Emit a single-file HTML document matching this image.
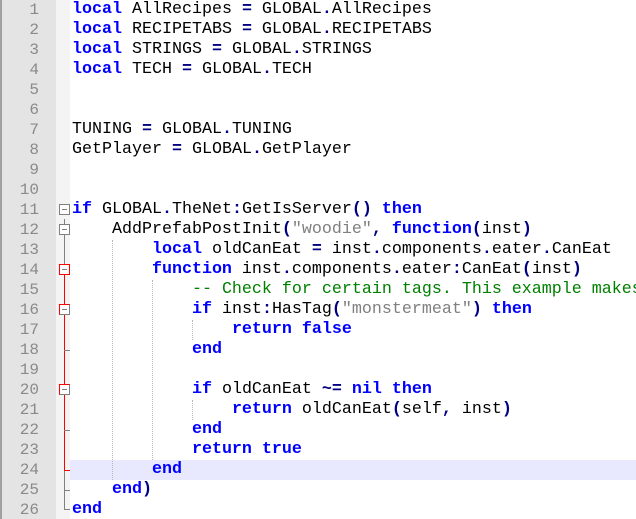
<!DOCTYPE html>
<html><head><meta charset="utf-8"><style>
html,body{margin:0;padding:0;background:#fff;width:636px;height:519px;overflow:hidden;position:relative}
#num{position:absolute;left:0;top:0;width:56px;height:519px;background:#e4e4e4;border-left:2px solid #a0a0a0;box-sizing:border-box}
#fold{position:absolute;left:56px;top:0;width:14px;height:519px;background:#f4f4f4}
.ln{position:absolute;left:0;width:39px;text-align:right;font:16px "Liberation Mono",monospace;color:#8a8a8a;line-height:20px}
#code{position:absolute;left:72px;top:0;margin:0;font:16.67px/20px "Liberation Mono",monospace;color:#000;white-space:pre}
.k{color:#0000ff;font-weight:bold}
.o{color:#000080;font-weight:bold}
.s{color:#808080}
.c{color:#008000}
.g{position:absolute;width:0;border-left:1px dotted #b8b8b8}
.hl{position:absolute;left:70px;top:460px;width:566px;height:20px;background:#e8e8ff}
.box{position:absolute;left:59px;width:9px;height:9px;border:1px solid #808080;background:#fff}
.box::after{content:"";position:absolute;left:2px;top:4px;width:5px;height:1px;background:#808080}
.vl{position:absolute;left:64px;width:1px}
.t{position:absolute;left:64px;width:6px;height:1px}
</style></head><body>
<div id="num"></div><div id="fold"></div>
<div class="hl"></div>
<div class="g" style="left:112px;top:240px;height:240px"></div>
<div class="g" style="left:152px;top:280px;height:180px"></div>
<div class="g" style="left:192px;top:320px;height:20px"></div>
<div class="g" style="left:192px;top:400px;height:20px"></div>
<!-- fold lines -->
<div class="vl" style="top:219px;height:50px;background:#808080"></div>
<div class="vl" style="top:274px;height:196px;background:#ff0000"></div>
<div class="vl" style="top:470px;height:40px;background:#808080"></div>
<div class="t" style="top:350px;background:#808080"></div>
<div class="t" style="top:430px;background:#808080"></div>
<div class="t" style="top:470px;background:#ff0000"></div>
<div class="t" style="top:490px;background:#808080"></div>
<div class="t" style="top:509px;background:#808080"></div>
<div class="box" style="top:204px"></div>
<div class="box" style="top:224px"></div>
<div class="box" style="top:264px;border-color:#ff0000"></div>
<div class="box" style="top:304px;border-color:#ff0000 #808080 #808080 #ff0000"></div>
<div class="box" style="top:384px;border-color:#ff0000 #808080 #808080 #ff0000"></div>
<div class="ln" style="top:0">1</div><div class="ln" style="top:20px">2</div><div class="ln" style="top:40px">3</div><div class="ln" style="top:60px">4</div><div class="ln" style="top:80px">5</div><div class="ln" style="top:100px">6</div><div class="ln" style="top:120px">7</div><div class="ln" style="top:140px">8</div><div class="ln" style="top:160px">9</div><div class="ln" style="top:180px">10</div><div class="ln" style="top:200px">11</div><div class="ln" style="top:220px">12</div><div class="ln" style="top:240px">13</div><div class="ln" style="top:260px">14</div><div class="ln" style="top:280px">15</div><div class="ln" style="top:300px">16</div><div class="ln" style="top:320px">17</div><div class="ln" style="top:340px">18</div><div class="ln" style="top:360px">19</div><div class="ln" style="top:380px">20</div><div class="ln" style="top:400px">21</div><div class="ln" style="top:420px">22</div><div class="ln" style="top:440px">23</div><div class="ln" style="top:460px">24</div><div class="ln" style="top:480px">25</div><div class="ln" style="top:500px">26</div>
<pre id="code"><span class="k">local</span> AllRecipes <span class="o">=</span> GLOBAL<span class="o">.</span>AllRecipes
<span class="k">local</span> RECIPETABS <span class="o">=</span> GLOBAL<span class="o">.</span>RECIPETABS
<span class="k">local</span> STRINGS <span class="o">=</span> GLOBAL<span class="o">.</span>STRINGS
<span class="k">local</span> TECH <span class="o">=</span> GLOBAL<span class="o">.</span>TECH


TUNING <span class="o">=</span> GLOBAL<span class="o">.</span>TUNING
GetPlayer <span class="o">=</span> GLOBAL<span class="o">.</span>GetPlayer


<span class="k">if</span> GLOBAL<span class="o">.</span>TheNet<span class="o">:</span>GetIsServer<span class="o">()</span> <span class="k">then</span>
    AddPrefabPostInit<span class="o">(</span><span class="s">"woodie"</span><span class="o">,</span> <span class="k">function</span><span class="o">(</span>inst<span class="o">)</span>
        <span class="k">local</span> oldCanEat <span class="o">=</span> inst<span class="o">.</span>components<span class="o">.</span>eater<span class="o">.</span>CanEat
        <span class="k">function</span> inst<span class="o">.</span>components<span class="o">.</span>eater<span class="o">:</span>CanEat<span class="o">(</span>inst<span class="o">)</span>
            <span class="c">-- Check for certain tags. This example makes</span>
            <span class="k">if</span> inst<span class="o">:</span>HasTag<span class="o">(</span><span class="s">"monstermeat"</span><span class="o">)</span> <span class="k">then</span>
                <span class="k">return</span> <span class="k">false</span>
            <span class="k">end</span>

            <span class="k">if</span> oldCanEat <span class="o">~=</span> <span class="k">nil</span> <span class="k">then</span>
                <span class="k">return</span> oldCanEat<span class="o">(</span>self<span class="o">,</span> inst<span class="o">)</span>
            <span class="k">end</span>
            <span class="k">return</span> <span class="k">true</span>
        <span class="k">end</span>
    <span class="k">end</span><span class="o">)</span>
<span class="k">end</span></pre>
</body></html>
